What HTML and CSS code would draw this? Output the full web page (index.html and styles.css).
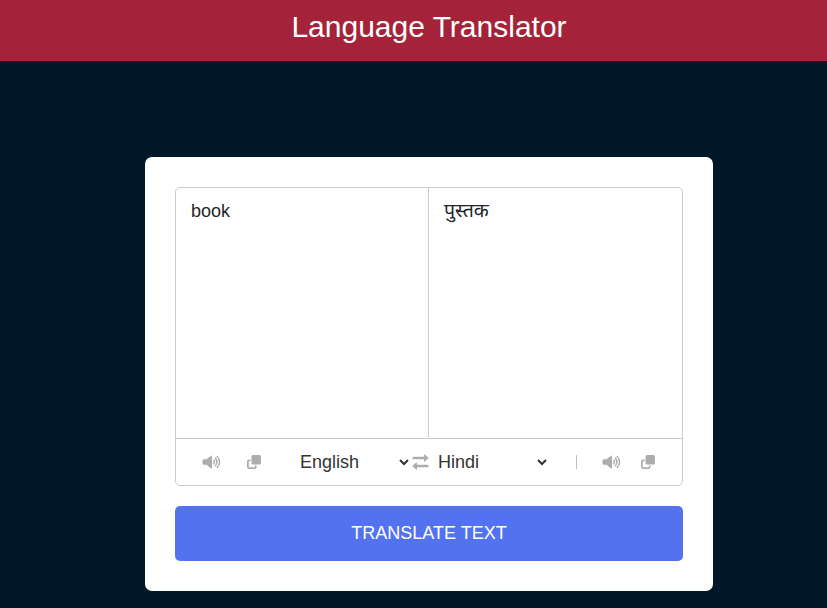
FILE: index.html
```html
<!DOCTYPE html>
<html lang="en">
<head>
<meta charset="utf-8">
<title>Language Translator</title>
<link rel="stylesheet" href="styles.css">
</head>
<body>
<svg class="symbols" aria-hidden="true">
  <symbol id="volume" viewBox="0 0 19 14">
    <path fill="currentColor" d="M.5 5.5Q.5 4.2 1.7 4.2H4.6L8.6.9Q10 0 10 1.4V12.6Q10 14 8.6 13.1L4.6 9.8H1.7Q.5 9.8 .5 8.5Z"/>
    <path fill="none" stroke="currentColor" stroke-width="1.4" stroke-linecap="round" d="M11.7 5.3Q13.3 7 11.7 8.7M13.4 3.3Q16.4 7 13.4 10.7M15.1 1.4Q20 7 15.1 12.6"/>
  </symbol>
  <symbol id="copy" viewBox="0 0 14 14">
    <rect fill="currentColor" x="4.5" width="9.5" height="9.5" rx="1.5"/>
    <path fill="none" stroke="currentColor" stroke-width="1.8" d="M3.6 5.3H2Q.9 5.3.9 6.4V12Q.9 13.1 2 13.1H7.6Q8.7 13.1 8.7 12V10.4"/>
  </symbol>
  <symbol id="swap" viewBox="0 0 17 16">
    <path fill="currentColor" d="M1.4 2.8H12V1Q12 0 12.8.6L16.2 3.5Q16.7 4 16.2 4.5L12.8 7.4Q12 8 12 7V5.2H1.4Q.5 5.2.5 4.4V3.6Q.5 2.8 1.4 2.8ZM15.6 10.8H5V9Q5 8 4.2 8.6L.8 11.5Q.3 12 .8 12.5L4.2 15.4Q5 16 5 15V13.2H15.6Q16.5 13.2 16.5 12.4V11.6Q16.5 10.8 15.6 10.8Z"/>
  </symbol>
  <symbol id="chevron" viewBox="0 0 10 7">
    <path fill="none" stroke="#333" stroke-width="2" d="M1 1L5 5L9 1"/>
  </symbol>
</svg>
<header class="header"><h1>Language Translator</h1></header>
<main class="main">
  <section class="card">
    <div class="wrapper">
      <div class="text-input">
        <div class="text from">book</div>
        <div class="text to" lang="hi">पुस्तक</div>
      </div>
      <div class="controls">
        <div class="icons left">
          <svg class="volume"><use href="#volume"/></svg>
          <svg class="copy"><use href="#copy"/></svg>
        </div>
        <div class="select first"><span>English</span><svg class="chevron"><use href="#chevron"/></svg></div>
        <svg class="swap"><use href="#swap"/></svg>
        <div class="select second"><span>Hindi</span><svg class="chevron"><use href="#chevron"/></svg></div>
        <div class="icons right">
          <svg class="volume"><use href="#volume"/></svg>
          <svg class="copy"><use href="#copy"/></svg>
        </div>
      </div>
    </div>
    <button class="translate">TRANSLATE TEXT</button>
  </section>
</main>
</body>
</html>
```

FILE: styles.css
```css
* { box-sizing: border-box; margin: 0; padding: 0; }
body {
  min-height: 608px;
  overflow: hidden;
  background: #001629;
  font-family: "Liberation Sans", "Noto Sans", sans-serif;
}
.symbols { display: none; }
.header {
  height: 61px;
  padding: 9px 0 0 31px;
  background: #a52339;
  color: #fff;
  text-align: center;
}
.header h1 { font-size: 30px; font-weight: 400; line-height: 36px; }
.main { display: flex; justify-content: center; padding: 96px 0 0 31px; }
.card { width: 568px; height: 434px; padding: 30px; border-radius: 7px; background: #fff; }
.wrapper { height: 299px; border: 1px solid #ccc; border-radius: 5px; }
.text-input { display: flex; height: 251px; border-bottom: 1px solid #ccc; }
.text { padding: 12px 15px; font-size: 18px; line-height: 22px; color: #212529; }
.from { width: 253px; border-right: 1px solid #ccc; }
.to { flex: 1; padding-top: 11px; font-size: 19.5px; }
.controls { display: flex; align-items: center; height: 46px; padding: 0 26px; color: #adadad; }
.icons { display: flex; align-items: center; }
.left { gap: 26px; width: 98px; }
.volume { width: 19px; height: 14px; }
.copy { width: 14px; height: 14px; }
.swap { width: 17px; height: 16px; margin: 0 9px 0 3px; }
.select { display: flex; align-items: center; justify-content: space-between; color: #333; font-size: 18px; line-height: 22px; }
.first { width: 109px; }
.second { width: 109px; }
.chevron { width: 10px; height: 7px; }
.right { gap: 20px; height: 14px; margin-left: 29px; padding-left: 25px; border-left: 1px solid #bfbfbf; }
.translate {
  display: block;
  width: 100%;
  height: 55px;
  margin-top: 20px;
  border: 0;
  border-radius: 5px;
  background: #5372f0;
  color: #fff;
  font: 18px "Liberation Sans", sans-serif;
}
```
